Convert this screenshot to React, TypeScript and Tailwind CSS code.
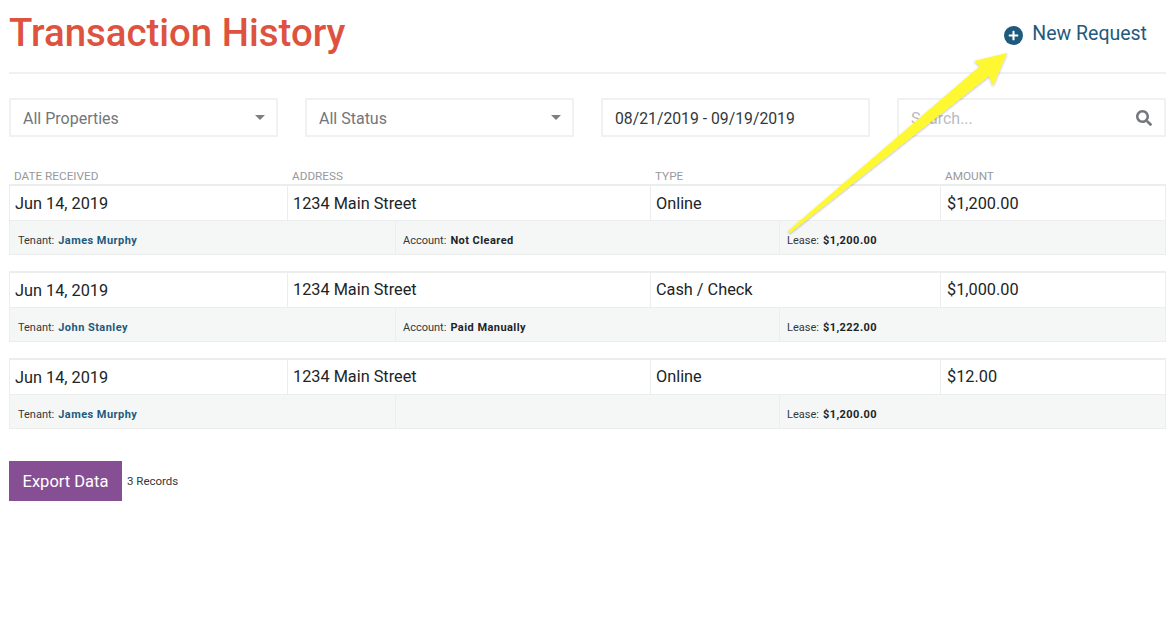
import { FaSearch, FaPlus } from "react-icons/fa";

type Row = { date: string; addr: string; type: string; amount: string; tenant: string; account?: string; lease: string };
const rows: Row[] = [
  { date: "Jun 14, 2019", addr: "1234 Main Street", type: "Online", amount: "$1,200.00", tenant: "James Murphy", account: "Not Cleared", lease: "$1,200.00" },
  { date: "Jun 14, 2019", addr: "1234 Main Street", type: "Cash / Check", amount: "$1,000.00", tenant: "John Stanley", account: "Paid Manually", lease: "$1,222.00" },
  { date: "Jun 14, 2019", addr: "1234 Main Street", type: "Online", amount: "$12.00", tenant: "James Murphy", lease: "$1,200.00" },
];

function Caret() {
  return <span className="w-0 h-0 border-x-[5px] border-x-transparent border-t-[5px] border-t-[#7b7f84]" />;
}

function Filter({ label }: { label: string }) {
  return (
    <div className="h-[39px] border-2 border-[#f0f1f1] flex items-center justify-between pl-[12px] pr-[11px] text-[16px] text-[#72767b]">
      <span className="pt-[2px]">{label}</span>
      <Caret />
    </div>
  );
}

export default function App() {
  return (
    <div className="relative w-[1175px] h-[624px] bg-white overflow-hidden font-['Roboto','Inter',sans-serif] pl-[9px] pr-[9px]">
      <header className="h-[74px] border-b-2 border-[#f0f1f1] flex items-start justify-between">
        <h1 className="text-[38.4px] leading-[44px] mt-[11px] text-[#dd5340] font-medium">Transaction History</h1>
        <a className="flex items-center mt-[20px] mr-[19px] text-[19.5px] leading-[26px] text-[#1f5a7d]">
          <span className="w-[19px] h-[19px] mt-[3px] rounded-full bg-[#1f5a7d] flex items-center justify-center mr-[9px]">
            <FaPlus size={11} color="#fff" />
          </span>
          <span className="pt-px">New Request</span>
        </a>
      </header>

      <div className="grid grid-cols-4 gap-[27px] mt-[24px]">
        <Filter label="All Properties" />
        <Filter label="All Status" />
        <div className="h-[39px] border-2 border-[#f0f1f1] flex items-center pl-[12px] pt-[2px] text-[15.75px] text-[#33373b]">08/21/2019 - 09/19/2019</div>
        <div className="h-[39px] border-2 border-[#f0f1f1] flex items-center justify-between pl-[12px] pr-[12px] text-[16px] text-[#b9bcbf]">
          <span className="pt-[2px]">Search...</span>
          <FaSearch size={16} color="#74787c" />
        </div>
      </div>

      <div className="grid grid-cols-[279px_363px_290px_1fr] mt-[32px] h-[15px] text-[11.75px] leading-[14px] text-[#97999d]">
        <span className="pl-[5px]">DATE RECEIVED</span>
        <span className="pl-[4px]">ADDRESS</span>
        <span className="pl-[4px]">TYPE</span>
        <span className="pl-[4px]">AMOUNT</span>
      </div>

      <div className="flex flex-col gap-[16px]">
        {rows.map((r, i) => (
          <div key={i} className="border border-[#eceeee] border-t-2">
            <div className="grid grid-cols-[278px_363px_290px_1fr] h-[35px] items-center text-[16.3px] text-[#212427] border-b border-[#eceeee]">
              <div className={`pl-[5px] h-full flex items-center border-r border-[#eceeee] ${i > 0 ? "pt-[3px]" : "pt-[2px]"}`}>{r.date}</div>
              <div className={`pl-[5px] h-full flex items-center border-r border-[#eceeee] ${i === 0 ? "pt-[2px]" : ""}`}>{r.addr}</div>
              <div className={`pl-[5px] h-full flex items-center border-r border-[#eceeee] ${i === 0 ? "pt-[2px]" : ""}`}>{r.type}</div>
              <div className={`pl-[6px] h-full flex items-center ${i === 0 ? "pt-[2px]" : ""}`}>{r.amount}</div>
            </div>
            <div className="grid grid-cols-[386px_384px_1fr] h-[33px] items-center bg-[#f5f7f7] text-[11px] text-[#33373b]">
              <div className="pl-[8px] pt-[8px] h-full flex items-center gap-[4px] border-r border-[#eceeee]">
                Tenant: <b className="text-[#1f5a7d] font-bold tracking-[0.45px]">{r.tenant}</b>
              </div>
              <div className="pl-[7px] pt-[8px] h-full flex items-center gap-[4px] border-r border-[#eceeee]">
                {r.account && <>Account: <b className="font-bold text-[#212427] tracking-[0.45px]">{r.account}</b></>}
              </div>
              <div className="pl-[7px] pt-[8px] h-full flex items-center gap-[4px]">
                Lease: <b className="font-bold text-[#212427] tracking-[0.45px]">{r.lease}</b>
              </div>
            </div>
          </div>
        ))}
      </div>

      <div className="flex items-center mt-[32px]">
        <button className="w-[113px] h-[40px] pt-[2px] bg-[#864f94] text-white text-[16.5px]">Export Data</button>
        <span className="ml-[5px] pt-[2px] text-[11.5px] text-[#33373b]">3 Records</span>
      </div>

      <svg className="absolute left-0 top-0 pointer-events-none" width="1175" height="624" viewBox="0 0 1175 624">
        <defs>
          <filter id="sh" x="-20%" y="-20%" width="140%" height="140%">
            <feDropShadow dx="0" dy="1" stdDeviation="1" floodColor="#000" floodOpacity="0.3" />
          </filter>
        </defs>
        <polygon points="788,231 980,66 974,61 1007,53 993,86 989,76 790,233" fill="#fdf830" filter="url(#sh)" />
      </svg>
    </div>
  );
}
